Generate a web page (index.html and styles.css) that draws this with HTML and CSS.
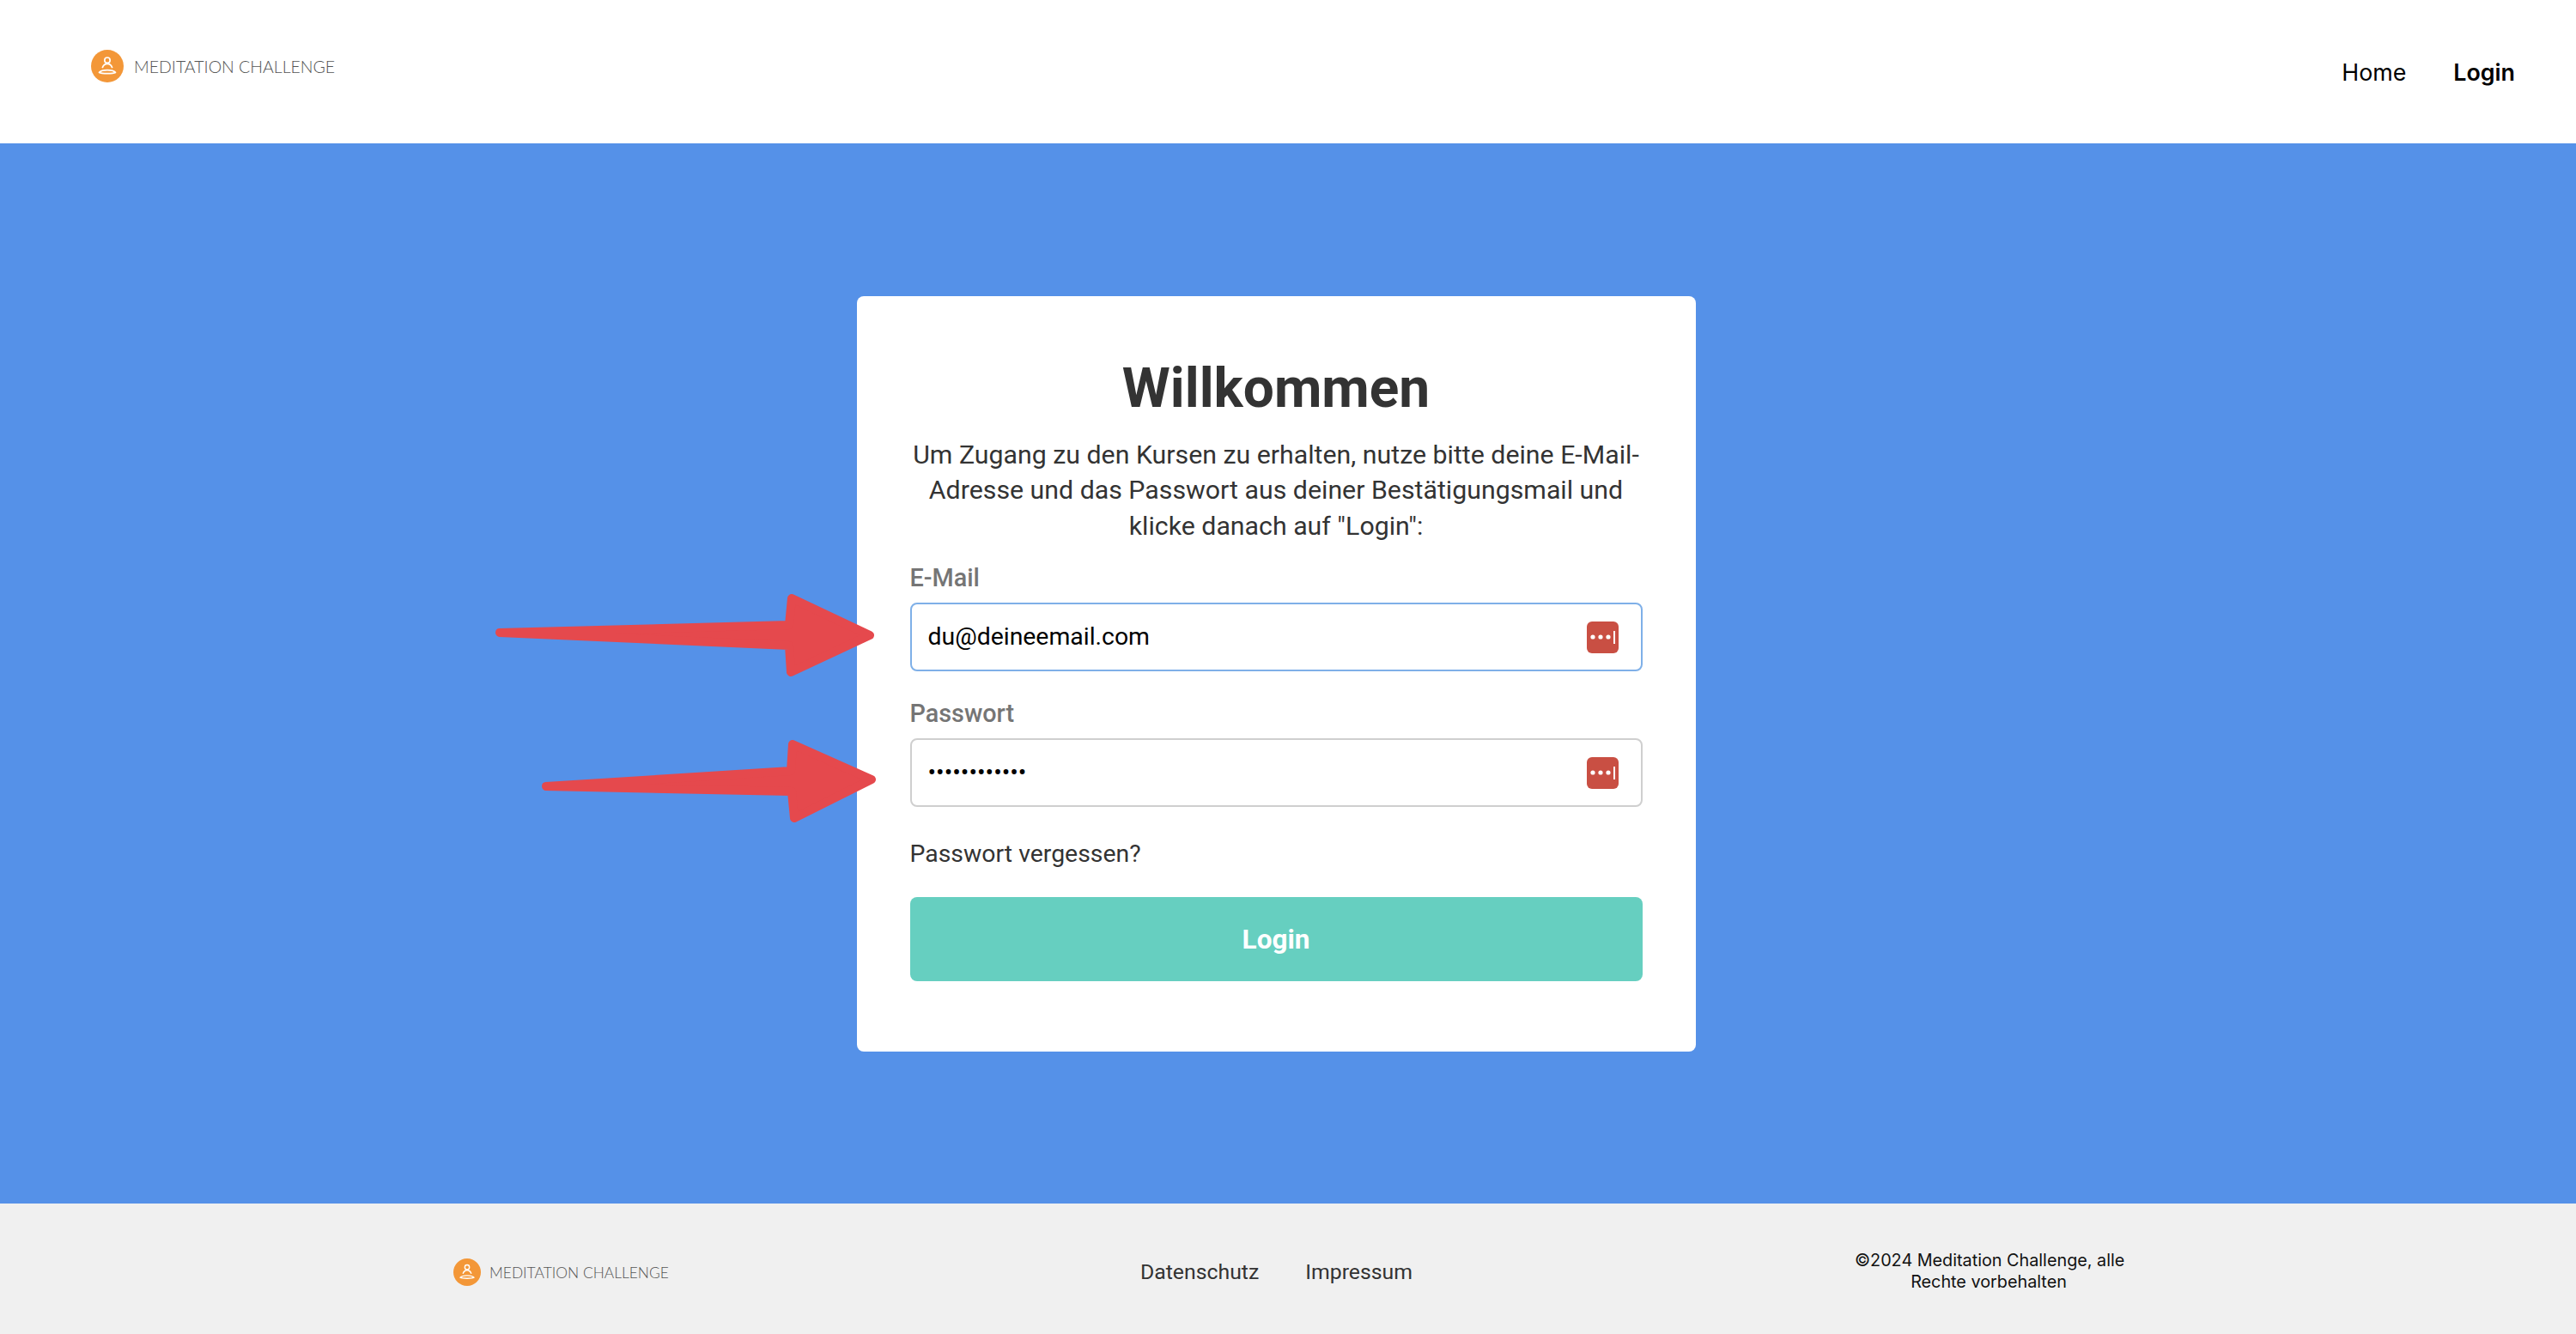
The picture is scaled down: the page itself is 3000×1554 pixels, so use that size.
FILE: index.html
```html
<!DOCTYPE html>
<html lang="de">
<head>
    <meta charset="UTF-8">
    <meta name="viewport" content="width=device-width, initial-scale=1.0">
    <title>Meditation Challenge Login</title>
    <link rel="stylesheet" href="styles.css">
</head>
<body>
    <header class="site-header">
        <a class="logo" href="#">
            <svg class="logo-icon" viewBox="0 0 36 36">
                <circle cx="18" cy="18" r="18" fill="#f39738"/>
                <circle cx="18" cy="11.500" r="3" fill="none" stroke="#fff" stroke-width="1.600"/>
                <path d="M12.500 20c1-3 3-4.500 5.500-4.500s4.500 1.500 5.500 4.500" fill="none" stroke="#fff" stroke-width="1.600"/>
                <path d="M9 25c3-3.500 15-3.500 18 0c-3 1.500-15 1.500-18 0z" fill="none" stroke="#fff" stroke-width="1.600" stroke-linejoin="round"/>
            </svg>
            <span class="logo-text">MEDITATION CHALLENGE</span>
        </a>
        <nav class="main-nav">
            <a href="#">Home</a>
            <a href="#" class="active">Login</a>
        </nav>
    </header>

    <main class="hero">
        <div class="card">
            <h1>Willkommen</h1>
            <p class="intro">Um Zugang zu den Kursen zu erhalten, nutze bitte deine E-Mail-Adresse und das Passwort aus deiner Bestätigungsmail und klicke danach auf "Login":</p>
            <form class="login-form">
                <label for="email">E-Mail</label>
                <div class="field focused">
                    <input type="email" id="email" value="du@deineemail.com">
                    <svg class="pass-icon" viewBox="0 0 37 37">
                        <rect width="37" height="37" rx="6" fill="#c94f43"/>
                        <circle cx="7" cy="18" r="2.600" fill="#fff"/>
                        <circle cx="16" cy="18" r="2.600" fill="#fff"/>
                        <circle cx="25" cy="18" r="2.600" fill="#fff"/>
                        <rect x="31" y="11" width="2" height="15" fill="#fff"/>
                    </svg>
                </div>
                <label for="password">Passwort</label>
                <div class="field">
                    <input type="password" id="password" value="passwort1234">
                    <svg class="pass-icon" viewBox="0 0 37 37">
                        <rect width="37" height="37" rx="6" fill="#c94f43"/>
                        <circle cx="7" cy="18" r="2.600" fill="#fff"/>
                        <circle cx="16" cy="18" r="2.600" fill="#fff"/>
                        <circle cx="25" cy="18" r="2.600" fill="#fff"/>
                        <rect x="31" y="11" width="2" height="15" fill="#fff"/>
                    </svg>
                </div>
                <a class="forgot" href="#">Passwort vergessen?</a>
                <button type="submit">Login</button>
            </form>
        </div>
    </main>

    <footer class="site-footer">
        <a class="logo logo-small" href="#">
            <svg class="logo-icon" viewBox="0 0 36 36">
                <circle cx="18" cy="18" r="18" fill="#f39738"/>
                <circle cx="18" cy="11.500" r="3" fill="none" stroke="#fff" stroke-width="1.600"/>
                <path d="M12.500 20c1-3 3-4.500 5.500-4.500s4.500 1.500 5.500 4.500" fill="none" stroke="#fff" stroke-width="1.600"/>
                <path d="M9 25c3-3.500 15-3.500 18 0c-3 1.500-15 1.500-18 0z" fill="none" stroke="#fff" stroke-width="1.600" stroke-linejoin="round"/>
            </svg>
            <span class="logo-text">MEDITATION CHALLENGE</span>
        </a>
        <div class="footer-links">
            <a href="#">Datenschutz</a>
            <a href="#">Impressum</a>
        </div>
        <p class="copyright">©2024 Meditation Challenge, alle<br>Rechte vorbehalten</p>
    </footer>

    <!-- red arrows drawn on top of the screenshot -->
    <svg class="arrows" viewBox="0 0 3000 1554">
        <path d="M582 737 L919 728 L922 697 L1013 740 L921 783 L919 752 Z" />
        <path d="M636 916 L921 898 L923 867 L1015 908 L925 953 L922 922 Z" />
    </svg>
</body>
</html>
```

FILE: styles.css
```css
* {
    box-sizing: border-box;
}
body {
    font-family: 'Roboto', sans-serif;
    margin: 0;
    min-height: 100vh;
    display: flex;
    flex-direction: column;
    position: relative;
    color: #333333;
}
a {
    color: inherit;
    text-decoration: none;
}
.site-header {
    height: 167px;
    background: #ffffff;
    padding: 0 71px 0 106px;
    display: flex;
    justify-content: space-between;
    align-items: center;
}
.logo {
    display: flex;
    align-items: center;
    gap: 12px;
    margin-bottom: 13px;
}
.logo-icon {
    width: 38px;
    height: 38px;
}
.logo-text {
    font-family: 'Lato', sans-serif;
    font-weight: 300;
    font-size: 19.500px;
    color: #555555;
    white-space: nowrap;
}
.main-nav {
    display: flex;
    gap: 55px;
    font-family: 'Inter', sans-serif;
    font-size: 26.800px;
    color: #000000;
}
.main-nav .active {
    font-weight: 600;
}
.hero {
    flex: 1;
    background: #5591e8;
    display: flex;
    justify-content: center;
    align-items: center;
    padding-right: 28px;
}
.card {
    width: 977px;
    height: 880px;
    background: #ffffff;
    border-radius: 8px;
    padding: 63px 62px 0;
    text-align: center;
}
h1 {
    margin: 0;
    font-size: 64px;
    line-height: 90px;
    font-weight: 700;
}
.intro {
    margin: 11px 0 24px;
    font-size: 30.300px;
    line-height: 41.500px;
}
.login-form {
    display: flex;
    flex-direction: column;
    text-align: left;
}
label {
    font-size: 28.800px;
    line-height: 32px;
    font-weight: 500;
    color: #757575;
    margin-bottom: 13px;
}
.field {
    height: 80px;
    border: 2px solid #cfcfcf;
    border-radius: 8px;
    display: flex;
    align-items: center;
    padding: 0 26px 0 19px;
    margin-bottom: 33px;
}
.field.focused {
    border-color: #7fb0e8;
}
.field input {
    flex: 1;
    border: none;
    outline: none;
    padding: 0 0 2px;
    font-family: 'Roboto', sans-serif;
    font-size: 28.400px;
    color: #000000;
    background: transparent;
}
.pass-icon {
    width: 37px;
    height: 37px;
}
.forgot {
    font-size: 28.400px;
    line-height: 34px;
    margin-top: 5px;
}
button {
    margin-top: 33px;
    height: 98px;
    background: #66cfc0;
    color: #ffffff;
    border: none;
    border-radius: 8px;
    font-family: 'Roboto', sans-serif;
    font-size: 31.500px;
    font-weight: 700;
}
.site-footer {
    height: 152px;
    background: #f0f0f0;
    padding: 5px 528px 0;
    display: grid;
    grid-template-columns: 800px 832px 312px;
    align-items: center;
}
.logo-small {
    gap: 10px;
    margin-top: 3px;
    margin-bottom: 0;
}
.logo-small .logo-icon {
    width: 32px;
    height: 32px;
}
.logo-small .logo-text {
    font-size: 17.400px;
}
.footer-links {
    display: flex;
    gap: 54px;
    font-size: 24.800px;
    margin-top: 2px;
}
.copyright {
    margin: 0;
    font-family: 'Inter', sans-serif;
    font-size: 19.800px;
    line-height: 25px;
    text-align: center;
    white-space: nowrap;
    color: #111111;
}
.arrows {
    position: absolute;
    top: 0;
    left: 0;
    width: 3000px;
    height: 1554px;
    pointer-events: none;
    fill: #e5494d;
    stroke: #e5494d;
    stroke-width: 10;
    stroke-linejoin: round;
}
```
